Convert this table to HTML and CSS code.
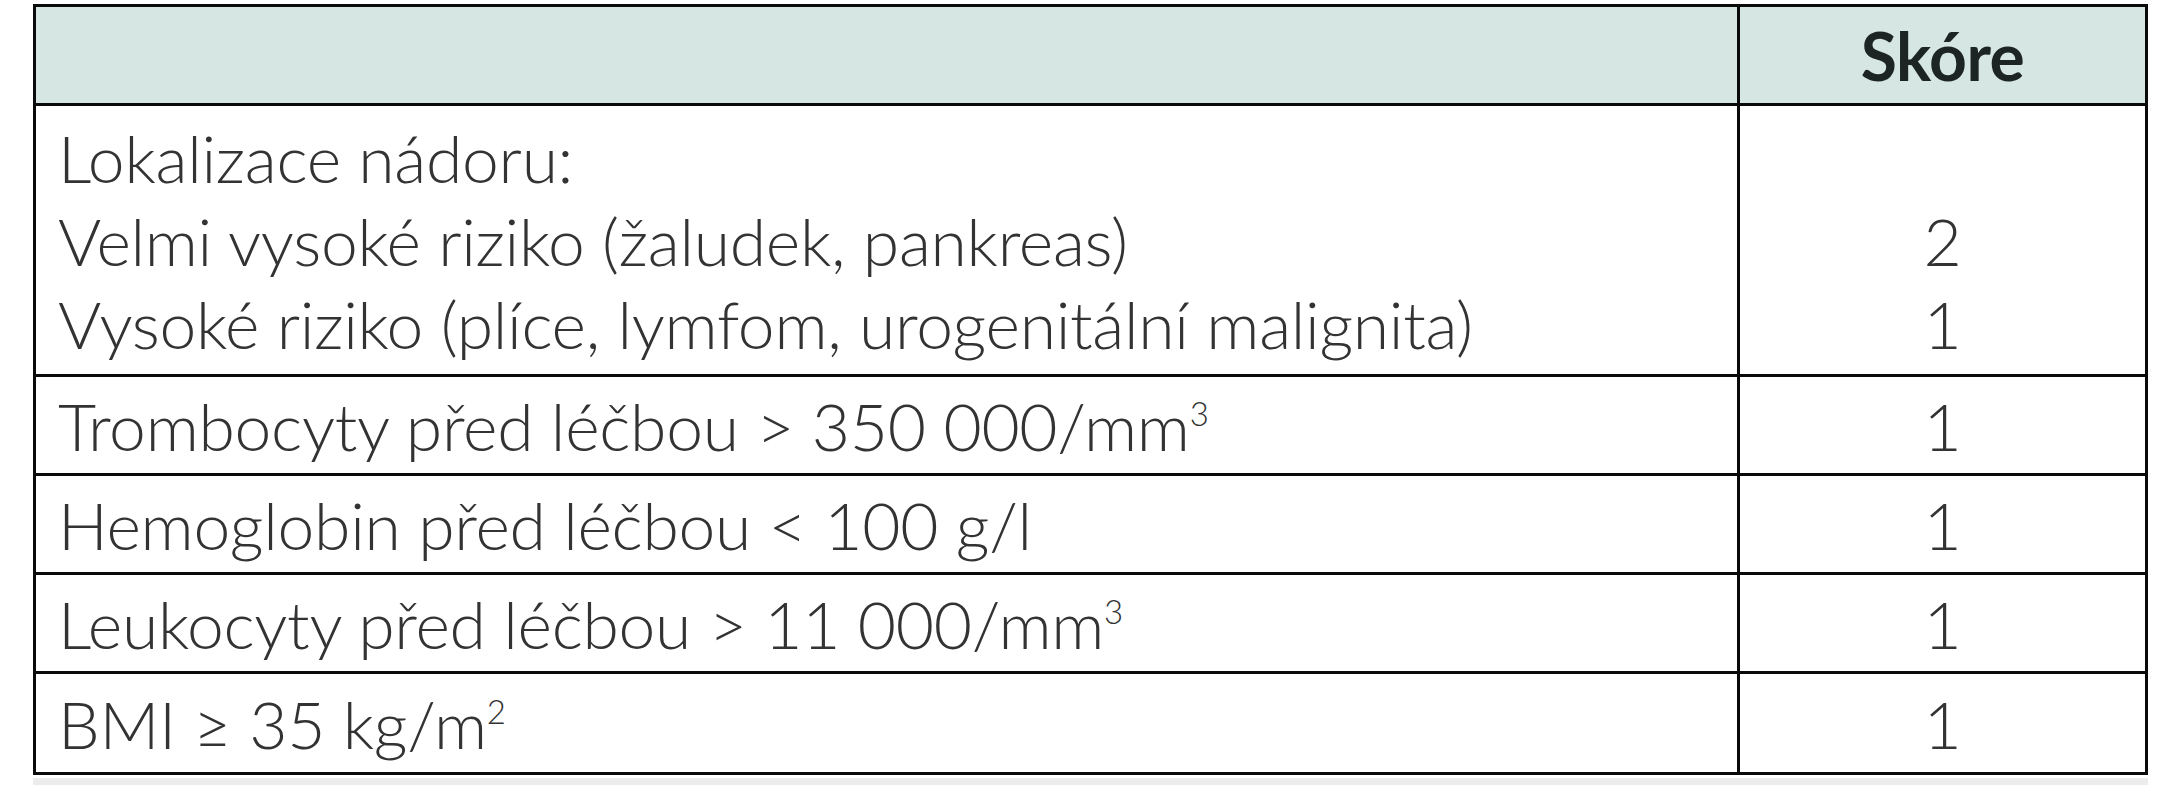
FILE: index.html
```html
<!DOCTYPE html>
<html lang="cs">
<head>
<meta charset="utf-8">
<title>Skóre rizika</title>
<link rel="stylesheet" href="styles.css">
</head>
<body>
<div class="sheet">
  <div class="score-table">
    <div class="cell head label"></div>
    <div class="cell head score">Skóre</div>

    <div class="cell label">
      <div class="line">Lokalizace nádoru:</div>
      <div class="line">Velmi vysoké riziko (žaludek, pankreas)</div>
      <div class="line">Vysoké riziko (plíce, lymfom, urogenitální malignita)</div>
    </div>
    <div class="cell score">
      <div class="line">&nbsp;</div>
      <div class="line">2</div>
      <div class="line">1</div>
    </div>

    <div class="cell label"><div class="line">Trombocyty před léčbou &gt; 350 000/mm<sup>3</sup></div></div>
    <div class="cell score"><div class="line">1</div></div>

    <div class="cell label"><div class="line">Hemoglobin před léčbou &lt; 100 g/l</div></div>
    <div class="cell score"><div class="line">1</div></div>

    <div class="cell label"><div class="line">Leukocyty před léčbou &gt; 11 000/mm<sup>3</sup></div></div>
    <div class="cell score"><div class="line">1</div></div>

    <div class="cell label last"><div class="line">BMI ≥ 35 kg/m<sup>2</sup></div></div>
    <div class="cell score last"><div class="line">1</div></div>
  </div>
  <div class="under"></div>
</div>
</body>
</html>
```

FILE: styles.css
```css
html, body {
  margin: 0;
  padding: 0;
  background: #ffffff;
}

body {
  font-family: Lato, "Open Sans", "Noto Sans", sans-serif;
  color: #333333;
}

.sheet {
  padding: 4px 0 0 33px;
  width: 2115px;
}

.score-table {
  display: grid;
  grid-template-columns: 1701px 408px;
  grid-template-rows: 99px 271px 99px 99px 99px 98px;
  border: 3px solid #0a0a0a;
  width: 2109px;
}

.cell {
  display: flex;
  flex-direction: column;
  justify-content: center;
  border-bottom: 3px solid #0a0a0a;
  font-size: 66px;
  font-weight: 300;
  line-height: 83px;
  letter-spacing: -0.3px;
}

.cell.last {
  border-bottom: none;
}

.cell.head {
  background: #d5e6e3;
}

.label {
  padding-left: 22px;
  white-space: nowrap;
}

.score {
  border-left: 3px solid #0a0a0a;
  text-align: center;
}

.head.score {
  font-weight: 700;
  color: #1d2424;
  letter-spacing: -0.5px;
}

.line {
  height: 83px;
}

sup {
  font-size: 0.5em;
  vertical-align: 0.75em;
  line-height: 0;
}

.under {
  margin-top: 3px;
  height: 7px;
  background: #ececec;
  width: 2115px;
}
```
